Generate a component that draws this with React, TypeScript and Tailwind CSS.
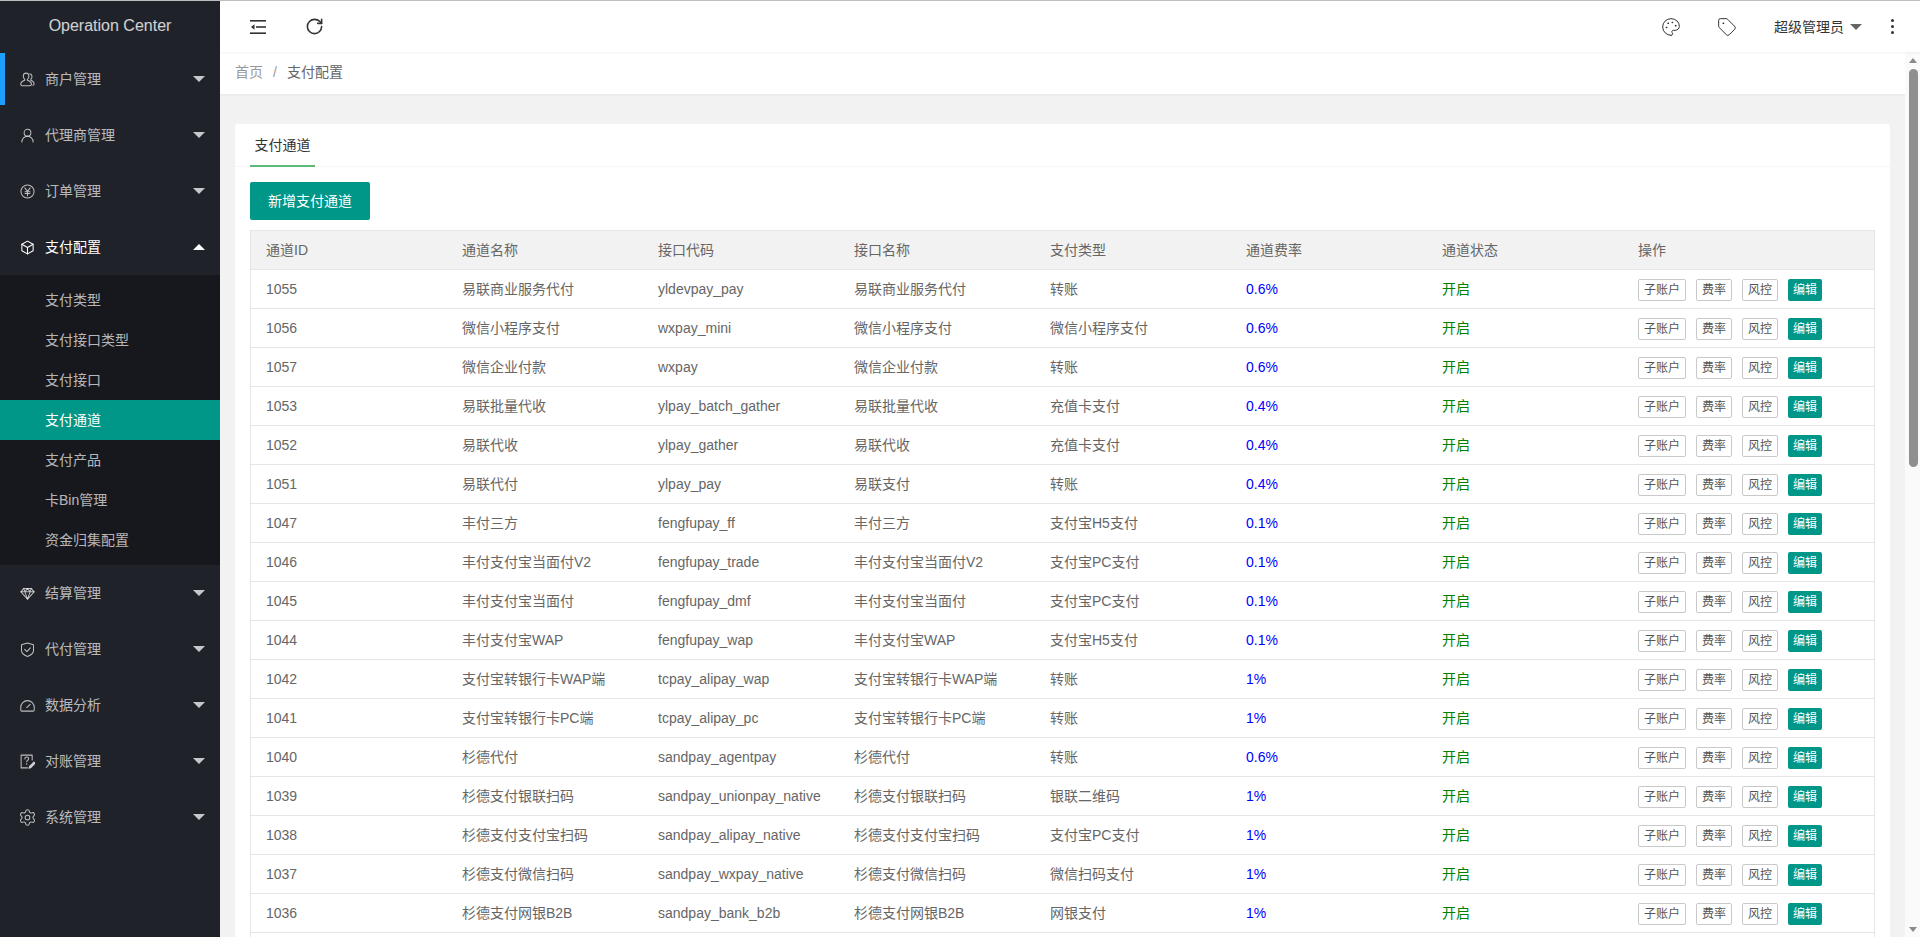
import type { ReactNode } from "react";
import { Palette, RotateCw, Settings, Tag } from "lucide-react";

const FONT = "font-['Liberation_Sans','Noto_Sans_CJK_SC',sans-serif]";

type IconProps = { className?: string };

function Svg({ className, children }: IconProps & { children: ReactNode }) {
  return (
    <svg
      viewBox="0 0 16 16"
      fill="none"
      stroke="currentColor"
      strokeWidth="1.1"
      strokeLinecap="round"
      strokeLinejoin="round"
      className={className}
    >
      {children}
    </svg>
  );
}

const UsersIcon = ({ className }: IconProps) => (
  <Svg className={className}>
    <path d="M6.5 1.2c-1.9 0-3 1.4-3 3.2 0 1.5.7 2.7 1.6 3.4v.9C3 9.4.8 10.6.8 13c0 1 .5 1.6 1.5 1.6h8.4c1 0 1.5-.6 1.5-1.6 0-2.4-2.2-3.6-4.3-4.3v-.9c.9-.7 1.6-1.9 1.6-3.4 0-1.8-1.1-3.2-3-3.2Z" />
    <path d="M10.5 1.8c1.4.3 2.3 1.3 2.3 2.9 0 1.3-.5 2.3-1.2 3v1c1.6.6 3.4 1.7 3.4 3.8 0 .9-.4 1.5-1.3 1.6" />
  </Svg>
);

const UserIcon = ({ className }: IconProps) => (
  <Svg className={className}>
    <circle cx="8" cy="5" r="3.6" />
    <path d="M2 15c0-3.6 2.6-6.3 6-6.3s6 2.7 6 6.3" />
  </Svg>
);

const YenIcon = ({ className }: IconProps) => (
  <Svg className={className}>
    <circle cx="8" cy="8" r="7" />
    <path d="M5.2 4.2 8 7.8l2.8-3.6M8 7.8v4.6M5.4 8.2h5.2M5.4 10.2h5.2" />
  </Svg>
);

const CubeIcon = ({ className }: IconProps) => (
  <Svg className={className}>
    <path d="M8 1.2 14 4.6v6.8l-6 3.4-6-3.4V4.6Z" />
    <path d="M2 4.6 8 8l6-3.4M8 8v6.8" />
  </Svg>
);

const DiamondIcon = ({ className }: IconProps) => (
  <Svg className={className}>
    <path d="M4 2.6h8L15 6.2 8 14 1 6.2Z" />
    <path d="M1 6.2h14M5.2 6.2 8 14l2.8-7.8M4 2.6l1.2 3.6L8 2.6l2.8 3.6L12 2.6" />
  </Svg>
);

const ShieldIcon = ({ className }: IconProps) => (
  <Svg className={className}>
    <path d="M8 1 14.4 3v6c0 3-3.2 5.2-6.4 6.4C4.800 14.200 1.600 12 1.600 9V3Z" />
    <path d="M5 7.800 7.400 10.200 11 6.200" />
  </Svg>
);

const GaugeIcon = ({ className }: IconProps) => (
  <Svg className={className}>
    <path d="M2 14c-.7 0-1.200-.5-1.200-1.200V10a7.200 7.200 0 0 1 14.400 0v2.800c0 .7-.5 1.200-1.200 1.200Z" />
    <path d="M7.200 10.200 10.800 6.800" />
  </Svg>
);

const HelpEditIcon = ({ className }: IconProps) => (
  <Svg className={className}>
    <path d="M13 6.500V1.200H1.200V14.800H8" />
    <path d="M5.200 5.200c0-1.300 1-2 2-2s2 .7 2 1.900c0 1.500-2 1.600-2 3.100M7.200 10.200v.6" />
    <path d="M15 8.500 10.200 13.300 9.600 15.200 11.500 14.600 16 10Z" fill="currentColor" />
  </Svg>
);

const GearIcon = ({ className }: IconProps) => (
  <Settings strokeWidth={1.3} className={`${className} scale-[1.25]`} />
);

const ShrinkIcon = () => (
  <svg viewBox="0 0 16 14" className="h-[14px] w-4 fill-[#333]">
    <rect x="0" y="0" width="16" height="1.600" />
    <rect x="0" y="12.400" width="16" height="1.600" />
    <rect x="6" y="6.200" width="10" height="1.600" />
    <path d="M4.500 4.200v5.600L1 7Z" />
  </svg>
);

function Caret({ up }: { up?: boolean }) {
  return up ? (
    <span className="ml-auto h-0 w-0 border-x-[6px] border-b-[6px] border-x-transparent border-b-white" />
  ) : (
    <span className="ml-auto h-0 w-0 border-x-[6px] border-t-[6px] border-x-transparent border-t-[#c6c7ca]" />
  );
}

const subMenu = ["支付类型", "支付接口类型", "支付接口", "支付通道", "支付产品", "卡Bin管理", "资金归集配置"];

function MenuItem({
  label,
  icon: Icon,
  open,
  marked,
}: {
  label: string;
  icon: (p: IconProps) => ReactNode;
  open?: boolean;
  marked?: boolean;
}) {
  return (
    <div
      className={`relative flex h-14 items-center pl-5 pr-[15px] text-sm ${
        open ? "text-white" : "text-white/70"
      }`}
    >
      {marked && <span className="absolute left-0 top-[2px] h-[52px] w-[5px] bg-[#1e9fff]" />}
      <Icon className="h-[15px] w-[15px] shrink-0" />
      <span className="ml-[10px]">{label}</span>
      <Caret up={open} />
    </div>
  );
}

function Sidebar() {
  return (
    <aside className="w-[220px] shrink-0 bg-[#20222a]">
      <div className="flex h-[50px] items-center justify-center text-base text-white/80">Operation Center</div>
      <MenuItem label="商户管理" icon={UsersIcon} marked />
      <MenuItem label="代理商管理" icon={UserIcon} />
      <MenuItem label="订单管理" icon={YenIcon} />
      <MenuItem label="支付配置" icon={CubeIcon} open />
      <div className="bg-[#17181d] py-[5px]">
        {subMenu.map((name) => (
          <div
            key={name}
            className={`flex h-10 items-center pl-[45px] text-sm ${
              name === "支付通道" ? "bg-[#009688] text-white" : "text-white/70"
            }`}
          >
            {name}
          </div>
        ))}
      </div>
      <MenuItem label="结算管理" icon={DiamondIcon} />
      <MenuItem label="代付管理" icon={ShieldIcon} />
      <MenuItem label="数据分析" icon={GaugeIcon} />
      <MenuItem label="对账管理" icon={HelpEditIcon} />
      <MenuItem label="系统管理" icon={GearIcon} />
    </aside>
  );
}

function Header() {
  return (
    <header className="z-10 flex h-[51px] shrink-0 items-center bg-white pl-[30px] pr-[26px] text-[#333] shadow-[0_1px_2px_rgba(0,0,0,0.05)]">
      <ShrinkIcon />
      <RotateCw size={19} strokeWidth={2} className="ml-[39px]" />
      <Palette size={20} strokeWidth={1.2} className="ml-auto" />
      <Tag size={20} strokeWidth={1.2} className="ml-[36px]" />
      <span className="ml-[37px] text-sm">超级管理员</span>
      <span className="ml-[6px] h-0 w-0 border-x-[6px] border-t-[6px] border-x-transparent border-t-[#666]" />
      <span className="ml-[29px] flex flex-col gap-[3px]">
        <i className="block h-[3px] w-[3px] rounded-full bg-[#333]" />
        <i className="block h-[3px] w-[3px] rounded-full bg-[#333]" />
        <i className="block h-[3px] w-[3px] rounded-full bg-[#333]" />
      </span>
    </header>
  );
}

const rows = [
  ["1055", "易联商业服务代付", "yldevpay_pay", "易联商业服务代付", "转账", "0.6%"],
  ["1056", "微信小程序支付", "wxpay_mini", "微信小程序支付", "微信小程序支付", "0.6%"],
  ["1057", "微信企业付款", "wxpay", "微信企业付款", "转账", "0.6%"],
  ["1053", "易联批量代收", "ylpay_batch_gather", "易联批量代收", "充值卡支付", "0.4%"],
  ["1052", "易联代收", "ylpay_gather", "易联代收", "充值卡支付", "0.4%"],
  ["1051", "易联代付", "ylpay_pay", "易联支付", "转账", "0.4%"],
  ["1047", "丰付三方", "fengfupay_ff", "丰付三方", "支付宝H5支付", "0.1%"],
  ["1046", "丰付支付宝当面付V2", "fengfupay_trade", "丰付支付宝当面付V2", "支付宝PC支付", "0.1%"],
  ["1045", "丰付支付宝当面付", "fengfupay_dmf", "丰付支付宝当面付", "支付宝PC支付", "0.1%"],
  ["1044", "丰付支付宝WAP", "fengfupay_wap", "丰付支付宝WAP", "支付宝H5支付", "0.1%"],
  ["1042", "支付宝转银行卡WAP端", "tcpay_alipay_wap", "支付宝转银行卡WAP端", "转账", "1%"],
  ["1041", "支付宝转银行卡PC端", "tcpay_alipay_pc", "支付宝转银行卡PC端", "转账", "1%"],
  ["1040", "杉德代付", "sandpay_agentpay", "杉德代付", "转账", "0.6%"],
  ["1039", "杉德支付银联扫码", "sandpay_unionpay_native", "杉德支付银联扫码", "银联二维码", "1%"],
  ["1038", "杉德支付支付宝扫码", "sandpay_alipay_native", "杉德支付支付宝扫码", "支付宝PC支付", "1%"],
  ["1037", "杉德支付微信扫码", "sandpay_wxpay_native", "杉德支付微信扫码", "微信扫码支付", "1%"],
  ["1036", "杉德支付网银B2B", "sandpay_bank_b2b", "杉德支付网银B2B", "网银支付", "1%"],
];

const columns = ["通道ID", "通道名称", "接口代码", "接口名称", "支付类型", "通道费率", "通道状态", "操作"];

function SmallButton({ children }: { children: ReactNode }) {
  return (
    <button className="h-[22px] rounded-[2px] border border-[#c9c9c9] bg-white px-[5px] text-xs leading-5 text-[#555]">
      {children}
    </button>
  );
}

function ChannelTable() {
  return (
    <div className="mt-[10px] border-x border-t border-[#e6e6e6]">
      <table className="w-full table-fixed border-separate border-spacing-0 text-sm text-[#666]">
        <colgroup>
          {columns.slice(0, 7).map((c) => (
            <col key={c} className="w-[196px]" />
          ))}
          <col />
        </colgroup>
        <thead>
          <tr className="bg-[#f2f2f2]">
            {columns.map((c) => (
              <th key={c} className="h-[39px] border-b border-[#e6e6e6] px-[15px] text-left font-normal">
                {c}
              </th>
            ))}
          </tr>
        </thead>
        <tbody>
          {rows.map((row) => (
            <tr key={row[0]}>
              {row.slice(0, 5).map((cell, i) => (
                <td key={i} className="h-[39px] border-b border-[#e6e6e6] px-[15px] whitespace-nowrap">
                  {cell}
                </td>
              ))}
              <td className="h-[39px] border-b border-[#e6e6e6] px-[15px] text-[#0000ff]">{row[5]}</td>
              <td className="h-[39px] border-b border-[#e6e6e6] px-[15px] text-[#008000]">开启</td>
              <td className="h-[39px] border-b border-[#e6e6e6] px-[15px] pt-[2px]">
                <div className="flex items-center gap-[10px]">
                  <SmallButton>子账户</SmallButton>
                  <SmallButton>费率</SmallButton>
                  <SmallButton>风控</SmallButton>
                  <button className="h-[22px] rounded-[2px] bg-[#009688] px-[5px] text-xs text-white">编辑</button>
                </div>
              </td>
            </tr>
          ))}
          <tr>
            <td colSpan={8} className="h-[39px]" />
          </tr>
        </tbody>
      </table>
    </div>
  );
}

function Scrollbar() {
  return (
    <div className="flex w-[15px] shrink-0 flex-col items-center bg-[#fafafa]">
      <span className="mt-[6px] h-0 w-0 border-x-[4px] border-b-[5px] border-x-transparent border-b-[#8a8a8a]" />
      <span className="ml-[1px] mt-[6px] h-[398px] w-[9px] rounded-t-[5px] rounded-b-[5px] bg-[#8f8f8f]" />
      <span className="mb-[5px] mt-auto h-0 w-0 border-x-[4px] border-t-[5px] border-x-transparent border-t-[#8a8a8a]" />
    </div>
  );
}

export default function App() {
  return (
    <div className={`flex h-[937px] w-[1920px] flex-col overflow-hidden bg-white ${FONT}`}>
      <div className="h-px shrink-0 bg-[#bdbdbd]" />
      <div className="flex min-h-0 flex-1">
        <Sidebar />
        <div className="flex min-w-0 flex-1 flex-col">
          <Header />
          <div className="flex min-h-0 flex-1">
            <main className="min-w-0 flex-1 overflow-hidden bg-[#f2f2f2]">
              <div className="flex h-[42px] items-center bg-white pb-[2px] pl-[15px] text-sm shadow-[0_1px_2px_rgba(0,0,0,0.05)]">
                <span className="text-[#999]">首页</span>
                <span className="mx-[10px] text-[#999]">/</span>
                <span className="text-[#666]">支付配置</span>
              </div>
              <section className="mx-[15px] mt-[30px] rounded-[2px] bg-white">
                <div className="h-[43px] border-b border-[#f6f6f6] px-[15px]">
                  <div className="flex h-[43px] w-[65px] justify-center border-b-[2px] border-[#5fb878] pt-[11px] text-sm text-[#333]">
                    支付通道
                  </div>
                </div>
                <div className="px-[15px] pt-[15px]">
                  <button className="h-[38px] w-[120px] rounded-[2px] bg-[#009688] text-sm text-white">
                    新增支付通道
                  </button>
                  <ChannelTable />
                </div>
              </section>
            </main>
            <Scrollbar />
          </div>
        </div>
      </div>
    </div>
  );
}
